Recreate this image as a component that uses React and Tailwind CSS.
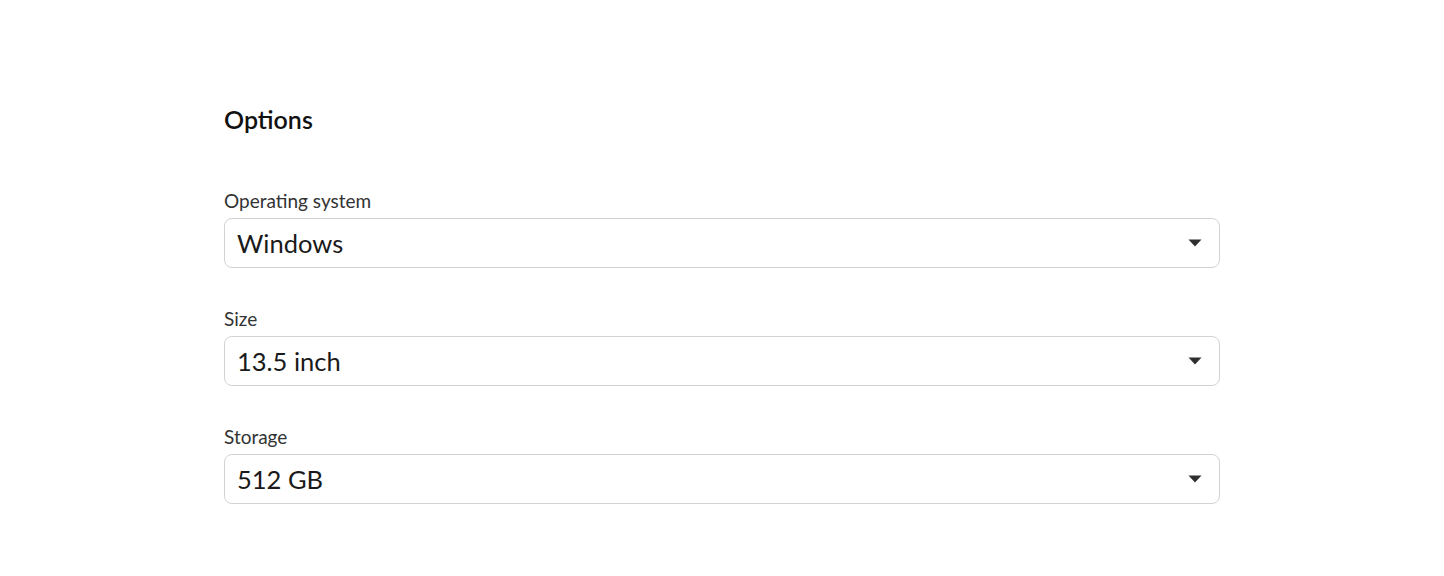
import React from "react";

const fields = [
  { label: "Operating system", value: "Windows" },
  { label: "Size", value: "13.5 inch" },
  { label: "Storage", value: "512 GB" },
];

const Caret = () => (
  <svg width="14" height="8" viewBox="0 0 14 8" className="shrink-0">
    <path d="M0.5 0.5h13L7 7.5z" fill="#2f2f2f" />
  </svg>
);

const SelectField = ({ label, value }) => (
  <div className="flex flex-col">
    <label className="text-[19px] leading-[22px] text-[#333333] mb-[6px]">{label}</label>
    <div className="flex items-center justify-between h-[50px] rounded-[8px] border border-[#d0d2d4] pl-[12px] pr-[17px] bg-white">
      <span className="text-[25.5px] text-[#1a1a1a]">{value}</span>
      <Caret />
    </div>
  </div>
);

export default function App() {
  return (
    <div className="min-h-[576px] bg-white pt-[103px] px-[224px]" style={{ fontFamily: "Lato, 'Noto Sans', sans-serif" }}>
      <div className="w-[996px]">
        <h2 className="text-[25px] leading-[32px] font-semibold text-[#111111] mb-[55px]">Options</h2>
        <div className="flex flex-col gap-[40px]">
          {fields.map((f) => (
            <SelectField key={f.label} label={f.label} value={f.value} />
          ))}
        </div>
      </div>
    </div>
  );
}
